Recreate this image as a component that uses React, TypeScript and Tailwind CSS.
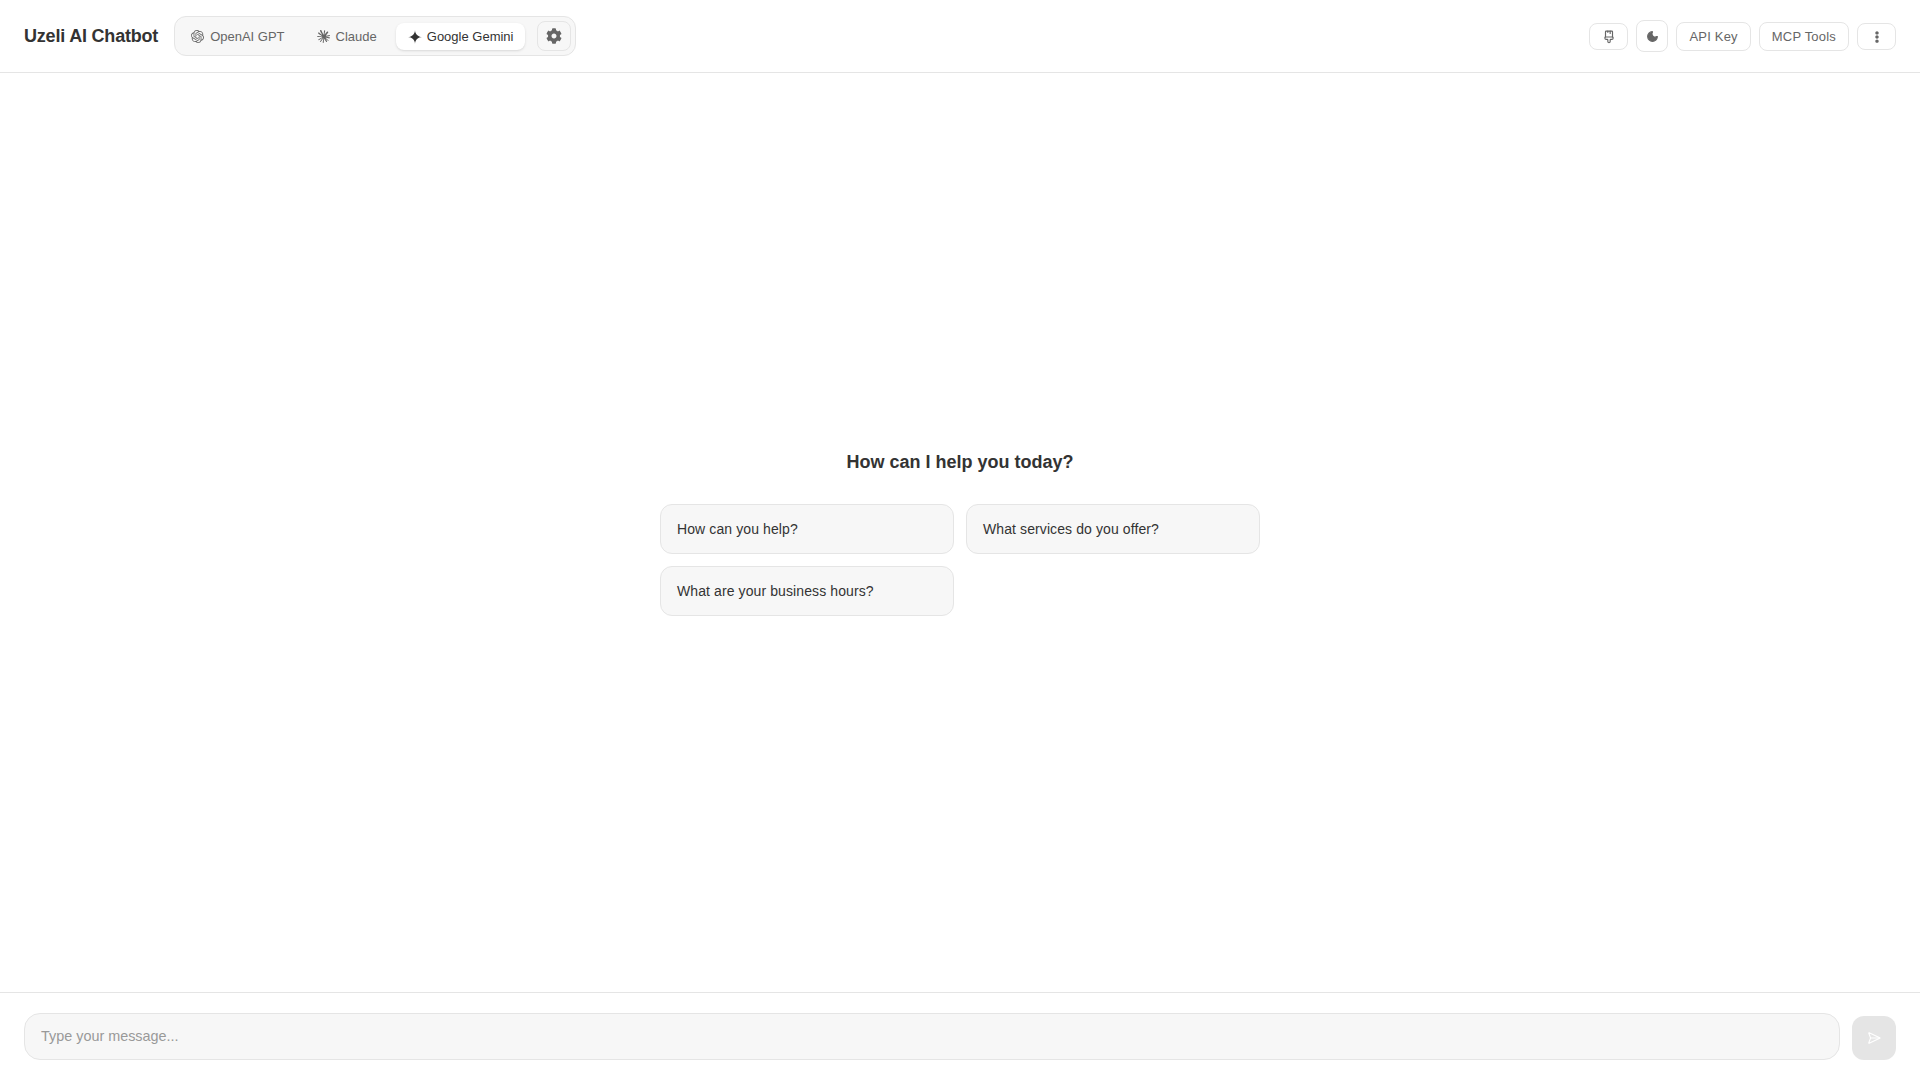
import React from 'react';
import { FaCog, FaEllipsisV } from 'react-icons/fa';
import { SiOpenai, SiClaude, SiGooglegemini } from 'react-icons/si';
import { Moon, PaintbrushVertical, SendHorizontal } from 'lucide-react';

const suggestions = ['How can you help?', 'What services do you offer?', 'What are your business hours?'];

const Header = () => (
  <header className="h-[73px] shrink-0 flex items-center justify-between px-6 border-b border-[#e5e5e5]">
    <div className="flex items-center gap-4">
      <h1 className="text-[18px] font-semibold tracking-[-0.2px] text-[#333333]">Uzeli AI Chatbot</h1>
      <div className="flex items-center gap-2 h-10 px-1 bg-[#f7f7f7] border border-[#e5e5e5] rounded-xl">
        <button className="mt-px h-[27px] px-3 flex items-center gap-1.5 text-[13px] text-[#666666] rounded-lg">
          <SiOpenai className="text-[13px]" />
          OpenAI GPT
        </button>
        <button className="mt-px h-[27px] pl-3 pr-[11px] flex items-center gap-1.5 text-[13px] text-[#666666] rounded-lg">
          <SiClaude className="text-[13px]" />
          Claude
        </button>
        <button className="mt-px h-[27px] px-3 flex items-center gap-[5px] text-[13px] text-[#333333] bg-white rounded-lg shadow-sm">
          <SiGooglegemini className="text-[14px]" />
          Google Gemini
        </button>
        <button className="ml-1 w-[34px] h-[30px] flex items-center justify-center text-[#666666] border border-[#e5e5e5] rounded-lg">
          <FaCog className="text-[16px]" />
        </button>
      </div>
    </div>
    <div className="flex items-center gap-2">
      <button className="mt-px w-[39px] h-[27px] flex items-center justify-center text-[#666666] border border-[#e5e5e5] rounded-lg">
        <PaintbrushVertical size={14} />
      </button>
      <button className="w-[32px] h-[32px] flex items-center justify-center text-[#666666] border border-[#e5e5e5] rounded-lg">
        <Moon size={13} fill="currentColor" />
      </button>
      <button className="h-[29px] px-3 pt-px text-[13px] tracking-[0.2px] text-[#666666] border border-[#e5e5e5] rounded-lg">API Key</button>
      <button className="h-[29px] px-3 pt-px text-[13px] tracking-[0.2px] text-[#666666] border border-[#e5e5e5] rounded-lg">MCP Tools</button>
      <button className="mt-px w-[39px] h-[27px] flex items-center justify-center text-[#666666] border border-[#e5e5e5] rounded-lg">
        <FaEllipsisV className="text-[12px]" />
      </button>
    </div>
  </header>
);

export default function App() {
  return (
    <div className="h-screen flex flex-col bg-white font-['Liberation_Sans',sans-serif]">
      <Header />
      <main className="flex-1 flex flex-col items-center justify-center">
        <h2 className="pt-[2px] text-[18px] font-semibold leading-[23px] text-[#333333] mb-[30px]">How can I help you today?</h2>
        <div className="grid grid-cols-2 gap-3 w-[600px]">
          {suggestions.map(s => (
            <button key={s} className="h-[50px] px-4 text-left text-[14px] tracking-[0.1px] text-[#333333] bg-[#f7f7f7] border border-[#e5e5e5] rounded-xl">
              {s}
            </button>
          ))}
        </div>
      </main>
      <footer className="h-[88px] shrink-0 flex items-start gap-3 px-6 pt-5 border-t border-[#e5e5e5]">
        <input
          placeholder="Type your message..."
          className="flex-1 h-[47px] px-4 pb-[2px] text-[14.4px] text-[#333333] placeholder:text-[#999999] bg-[#f7f7f7] border border-[#e5e5e5] rounded-2xl outline-none"
        />
        <button className="mt-[3px] w-11 h-11 flex items-center justify-center text-white bg-[#e5e5e5] rounded-xl">
          <SendHorizontal size={14} />
        </button>
      </footer>
    </div>
  );
}
